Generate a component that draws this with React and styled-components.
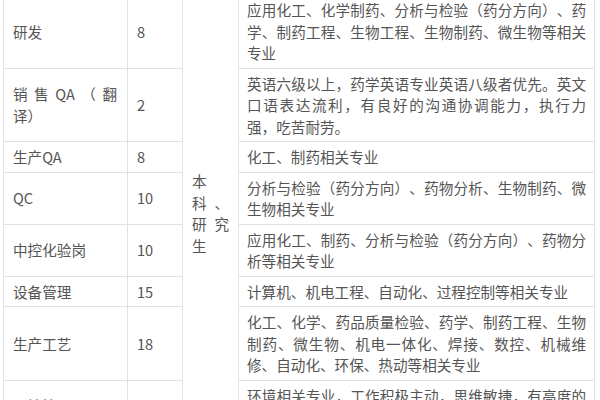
import React from 'react';
import styled, { createGlobalStyle } from 'styled-components';

const GlobalStyle = createGlobalStyle`
  html, body {
    margin: 0;
    padding: 0;
    background: #ffffff;
    overflow: hidden;
  }
`;

const Page = styled.div`
  width: 600px;
  height: 400px;
  overflow: hidden;
  background: #ffffff;
`;

const Table = styled.table`
  margin: -6px 0 0 3px;
  width: 592px;
  table-layout: fixed;
  border-collapse: collapse;
  font-family: "Noto Sans CJK SC", "Liberation Sans", sans-serif;
  font-size: 14.6px;
  line-height: 21.5px;
  color: #555555;
  text-spacing-trim: space-all;
`;

const Cell = styled.td`
  border: 1px solid #e2e2e2;
  padding: 4px 9px;
  vertical-align: middle;
  text-align: justify;
`;

const NameCell = styled(Cell)`
  padding-right: 10px;
`;

const MajorCell = styled(Cell)`
  padding: 4px 8px;
`;

const DegreeCell = styled(Cell)`
  padding: 4px 9px;
`;

const rows = [
  {
    name: '研发',
    count: '8',
    major: '应用化工、化学制药、分析与检验（药分方向）、药学、制药工程、生物工程、生物制药、微生物等相关专业',
  },
  {
    name: '销售QA（翻译）',
    count: '2',
    major: '英语六级以上，药学英语专业英语八级者优先。英文口语表达流利，有良好的沟通协调能力，执行力强，\u2060吃苦耐劳。',
  },
  { name: '生产QA', count: '8', major: '化工、制药相关专业' },
  {
    name: 'QC',
    count: '10',
    major: '分析与检验（药分方向）、药物分析、生物制药、微生物相关专业',
  },
  {
    name: '中控化验岗',
    count: '10',
    major: '应用化工、制药、分析与检验（药分方向）、药物分析等相关专业',
  },
  {
    name: '设备管理',
    count: '15',
    major: '计算机、机电工程、自动化、过程控制等相关专业',
  },
  {
    name: '生产工艺',
    count: '18',
    major: '化工、化学、药品质量检验、药学、制药工程、生物制药、微生物、机电一体化、焊接、数控、机械维修、自动化、环保、热动等相关专业',
  },
  {
    name: '环境管理员',
    count: '2',
    major: '环境相关专业，工作积极主动，思维敏捷，有高度的责任心',
  },
];

export default function App() {
  return (
    <Page>
      <GlobalStyle />
      <Table>
        <colgroup>
          <col style={{ width: 124 }} />
          <col style={{ width: 55 }} />
          <col style={{ width: 56 }} />
          <col />
        </colgroup>
        <tbody>
          {rows.map((r, i) => (
            <tr key={r.name}>
              <NameCell>{r.name}</NameCell>
              <Cell>{r.count}</Cell>
              {i === 0 && <DegreeCell rowSpan={rows.length}>本科、研究生</DegreeCell>}
              <MajorCell>{r.major}</MajorCell>
            </tr>
          ))}
        </tbody>
      </Table>
    </Page>
  );
}
